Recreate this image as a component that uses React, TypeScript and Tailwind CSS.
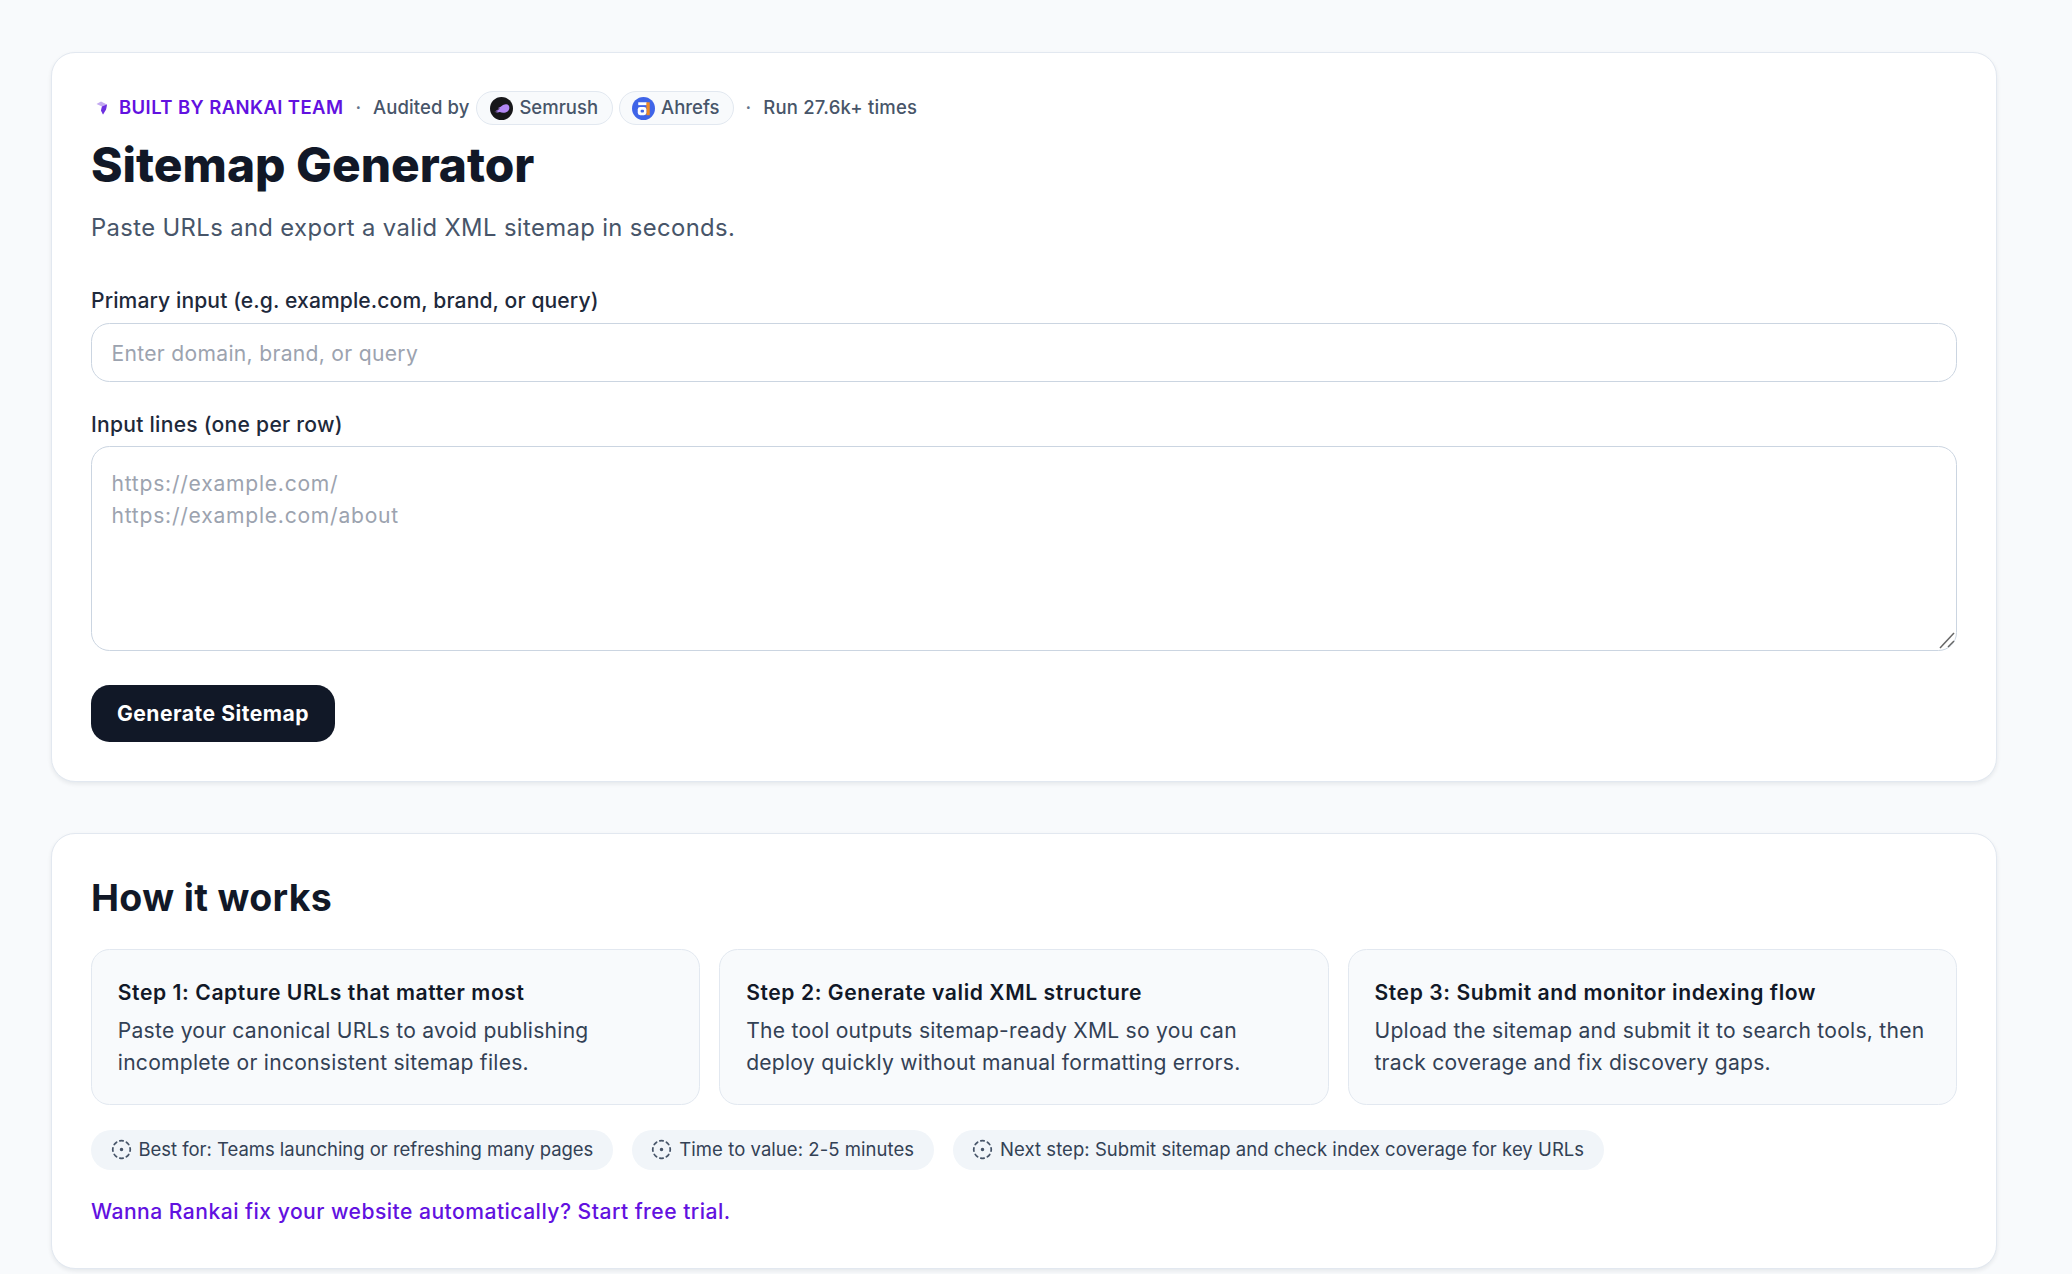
import React from "react";

function DashedDot() {
  return (
    <svg viewBox="0 0 24 24" className="w-[21px] h-[21px] shrink-0" fill="none" stroke="#475569" strokeWidth="2" strokeLinecap="round" strokeLinejoin="round">
      <path d="M10.1 2.182a10 10 0 0 1 3.8 0" />
      <path d="M13.9 21.818a10 10 0 0 1-3.8 0" />
      <path d="M17.609 3.721a10 10 0 0 1 2.69 2.7" />
      <path d="M2.182 13.9a10 10 0 0 1 0-3.8" />
      <path d="M20.279 17.609a10 10 0 0 1-2.7 2.69" />
      <path d="M21.818 10.1a10 10 0 0 1 0 3.8" />
      <path d="M3.721 6.391a10 10 0 0 1 2.7-2.69" />
      <path d="M6.391 20.279a10 10 0 0 1-2.67-2.7" />
      <circle cx="12" cy="12" r="1" fill="#475569" />
    </svg>
  );
}

function SemrushIcon() {
  return (
    <svg viewBox="0 0 24 24" className="w-[23px] h-[23px] shrink-0">
      <circle cx="12" cy="12" r="12" fill="#17171a" />
      <path d="M4.500 15.500c2-.2 3.400-.5 4.200-1.200-1 .1-2 0-3-.4 2 0 3.600-.6 4.600-1.800-.8 0-1.500-.2-2.100-.6C11 11 13.500 7.200 17 7.500c2 .2 3.200 1.700 3.200 3.600 0 3.100-2.800 5.300-6.400 5.300-1.300 0-2.500-.2-3.500-.7-1.500.5-3.500.5-5.800-.2z" fill="#b388f5" />
    </svg>
  );
}

function AhrefsIcon() {
  return (
    <svg viewBox="0 0 24 24" className="w-[23px] h-[23px] shrink-0">
      <circle cx="12" cy="12" r="12" fill="#3f64e8" />
      <rect x="6.500" y="5.500" width="9" height="3" fill="#ffffff" />
      <rect x="15" y="5.500" width="3.500" height="13.500" fill="#f08a24" />
      <rect x="6" y="10.500" width="9" height="8.500" rx="2.500" fill="#ffffff" />
      <rect x="9" y="13.300" width="3.500" height="2.800" rx="1" fill="#3f64e8" />
    </svg>
  );
}

function BrandMark() {
  return (
    <svg viewBox="0 0 12 14" className="w-[12px] h-[14px] shrink-0">
      <path d="M0.500 3 5 0.500l6 3-1 5L7 13.500 5 9.500 6 5.500z" fill="#c3aaf0" />
      <path d="M6 5.500l5-2-1 5L7 13.500 5 9.500z" fill="#6d2fe0" />
    </svg>
  );
}

function Dot() {
  return <span className="text-[#64748b]">·</span>;
}

function Step({ title, lines }: { title: string; lines: string[] }) {
  return (
    <div className="h-[156px] rounded-[18.500px] border border-[#e2e8f0] bg-[#f8fafc] pl-[25.800px] pr-[20px] pt-[27px]">
      <h3 className="text-[21.100px] leading-[32px] font-semibold tracking-[0.58px] text-[#111827]">{title}</h3>
      <p className="mt-[6px] text-[21.100px] leading-[32px] tracking-[0.25px] text-[#334155]">
        {lines.map((l) => (
          <span key={l} className="block whitespace-nowrap">{l}</span>
        ))}
      </p>
    </div>
  );
}

function Pill({ text, className }: { text: string; className: string }) {
  return (
    <span className={"inline-flex h-[40px] items-center gap-[7px] rounded-full bg-[#f1f5f9] px-[19.500px] text-[18.500px] text-[#334155] whitespace-nowrap " + className}>
      <DashedDot />
      {text}
    </span>
  );
}

export default function App() {
  return (
    <div className="min-h-[1274px] bg-[#f8fafc] pt-[52px] pl-[51px] pr-[75px] text-[#0f172a] [font-family:Inter,'Liberation_Sans',sans-serif]">
      <section className="h-[730px] rounded-[24px] border border-[#e2e8f0] bg-white px-[39px] pt-[38px] shadow-[0_2px_4px_rgba(15,23,42,0.08)]">
        <div className="flex h-[34px] items-center text-[18.500px] font-medium text-[#475569] whitespace-nowrap">
          <span className="ml-[5px] mr-[11px]"><BrandMark /></span>
          <span className="font-semibold tracking-[0.4px] text-[#6211e0]">BUILT BY RANKAI TEAM</span>
          <span className="mx-[12px]"><Dot /></span>
          <span className="tracking-[0.1px]">Audited by</span>
          <span className="ml-[7px] inline-flex h-[34px] items-center gap-[6px] rounded-full border border-[#e2e8f0] bg-[#f8fafc] pl-[13px] pr-[14px]"><SemrushIcon />Semrush</span>
          <span className="ml-[6px] inline-flex h-[34px] items-center gap-[6px] rounded-full border border-[#e2e8f0] bg-[#f8fafc] pl-[12px] pr-[13px]"><AhrefsIcon />Ahrefs</span>
          <span className="mx-[12px]"><Dot /></span>
          <span className="tracking-[0.22px]">Run 27.6k+ times</span>
        </div>
        <h1 className="mt-[11px] text-[47.800px] leading-[58px] font-extrabold text-[#111827]">Sitemap Generator</h1>
        <p className="mt-[16px] text-[23.800px] leading-[36px] tracking-[0.38px] text-[#475569]">Paste URLs and export a valid XML sitemap in seconds.</p>

        <label className="mt-[39px] block text-[21.100px] leading-[32px] font-medium tracking-[0.1px] text-[#1e293b]">Primary input (e.g. example.com, brand, or query)</label>
        <input
          readOnly
          placeholder="Enter domain, brand, or query"
          className="mt-[6px] block h-[59px] w-full rounded-[18.500px] border border-[#cbd5e1] bg-white px-[19.500px] pt-[1px] text-[21.100px] tracking-[0.3px] outline-none placeholder:text-[#9ca3af]"
        />
        <label className="mt-[26.500px] block text-[21.100px] leading-[32px] font-medium tracking-[0.26px] text-[#1e293b]">Input lines (one per row)</label>
        <div className="relative mt-[5.500px]">
          <textarea
            readOnly
            placeholder={"https://example.com/\nhttps://example.com/about"}
            className="block h-[205px] w-full resize-none rounded-[18.500px] border border-[#cbd5e1] bg-white px-[19.500px] py-[21px] text-[21.100px] leading-[32px] tracking-[0.75px] outline-none placeholder:text-[#9ca3af]"
          />
          <svg viewBox="0 0 20 20" className="absolute right-[1px] bottom-[1px] h-[20px] w-[20px]" fill="none" stroke="#666666" strokeWidth="1.500">
            <path d="M4 18 18 3" />
            <path d="M12 17 18 11" />
          </svg>
        </div>
        <button className="mt-[34px] block h-[57px] w-[244px] rounded-[18.500px] bg-[#111827] pt-[1px] text-[21.100px] font-bold tracking-[0.5px] text-white">Generate Sitemap</button>
      </section>

      <section className="mt-[51px] h-[436px] rounded-[24px] border border-[#e2e8f0] bg-white px-[39px] pt-[39px] shadow-[0_2px_4px_rgba(15,23,42,0.08)]">
        <h2 className="text-[37.500px] leading-[50px] font-bold tracking-[0.35px] text-[#111827]">How it works</h2>
        <div className="mt-[26px] grid grid-cols-3 gap-[19px]">
          <Step title="Step 1: Capture URLs that matter most" lines={["Paste your canonical URLs to avoid publishing", "incomplete or inconsistent sitemap files."]} />
          <Step title="Step 2: Generate valid XML structure" lines={["The tool outputs sitemap-ready XML so you can", "deploy quickly without manual formatting errors."]} />
          <Step title="Step 3: Submit and monitor indexing flow" lines={["Upload the sitemap and submit it to search tools, then", "track coverage and fix discovery gaps."]} />
        </div>
        <div className="mt-[24.500px] flex gap-[19px]">
          <Pill className="tracking-[-0.03px]" text="Best for: Teams launching or refreshing many pages" />
          <Pill className="tracking-[0.05px]" text="Time to value: 2-5 minutes" />
          <Pill className="tracking-[0.05px]" text="Next step: Submit sitemap and check index coverage for key URLs" />
        </div>
        <a className="mt-[26px] block text-[21.100px] leading-[32px] font-medium tracking-[0.47px] text-[#6211e0]">Wanna Rankai fix your website automatically? Start free trial.</a>
      </section>
    </div>
  );
}
